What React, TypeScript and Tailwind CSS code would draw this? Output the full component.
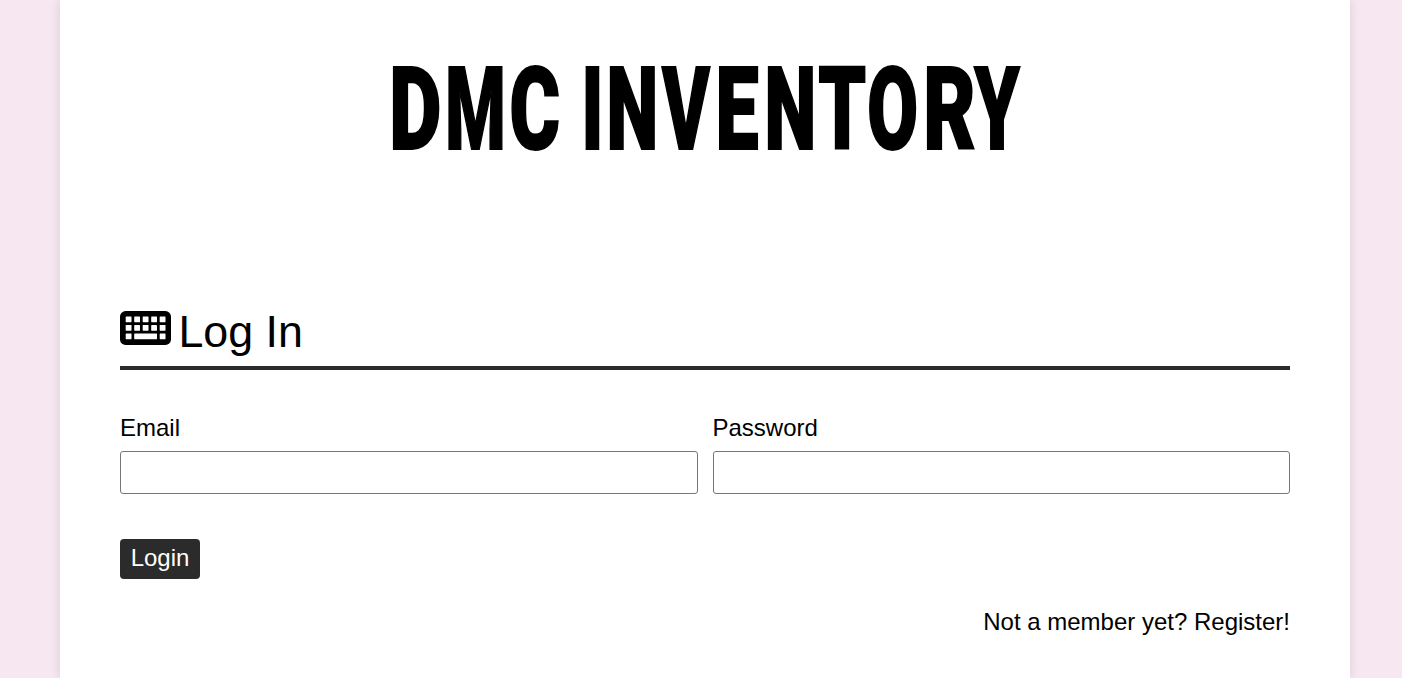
const TITLE = [
  { char: "D", box: "w-[47px] mr-[9px]", scale: "scale-x-[0.70]" },
  { char: "M", box: "w-[55px] mr-[8px]", scale: "scale-x-[0.60]" },
  { char: "C", box: "w-[48px]", scale: "scale-x-[0.67]" },
  { char: " ", box: "w-[26px]", scale: "scale-x-100" },
  { char: "I", box: "w-[15px] mr-[10px]", scale: "scale-x-[0.63]" },
  { char: "N", box: "w-[46px] mr-[6px]", scale: "scale-x-[0.64]" },
  { char: "V", box: "w-[49px] mr-[7px]", scale: "scale-x-[0.63]" },
  { char: "E", box: "w-[40px] mr-[10px]", scale: "scale-x-[0.67]" },
  { char: "N", box: "w-[46px] mr-[5px]", scale: "scale-x-[0.64]" },
  { char: "T", box: "w-[47px] mr-[3px]", scale: "scale-x-[0.66]" },
  { char: "O", box: "w-[48px] mr-[8px]", scale: "scale-x-[0.64]" },
  { char: "R", box: "w-[50px]", scale: "scale-x-[0.70]" },
  { char: "Y", box: "w-[46px]", scale: "scale-x-[0.63]" },
];

function KeyboardIcon({ className }: { className: string }) {
  return (
    <svg viewBox="0 0 51 34" className={className} aria-hidden="true">
      <rect width="51" height="34" rx="5.6" fill="currentColor" />
      <g fill="white">
        {[5.6, 14.1].map((y) =>
          [5.7, 14.2, 22.7, 31.2, 39.7].map((x) => (
            <rect key={`${x}-${y}`} x={x} y={y} width="5.8" height="5.6" rx="0.4" />
          )),
        )}
        <rect x="5.7" y="22.6" width="5.8" height="5.6" rx="0.4" />
        <rect x="14.2" y="22.6" width="22.8" height="5.6" rx="0.4" />
        <rect x="39.7" y="22.6" width="5.8" height="5.6" rx="0.4" />
      </g>
    </svg>
  );
}

function Field({ id, label, type }: { id: string; label: string; type: string }) {
  return (
    <div className="flex flex-1 flex-col">
      <label htmlFor={id} className="h-9 text-[24px] leading-9">
        {label}
      </label>
      <input
        id={id}
        type={type}
        className="mt-[5px] h-[43px] w-full rounded-[3px] border border-[#767676] bg-white px-2 text-[24px] outline-none"
      />
    </div>
  );
}

export default function App() {
  return (
    <div className="h-[678px] overflow-hidden bg-[#f7e7f1] pr-[52px] pl-[60px] font-['Liberation_Sans',Arial,sans-serif] text-black">
      <main className="flex h-full flex-col bg-white px-[60px] shadow-[0_0_10px_rgba(0,0,0,0.12)]">
        <h1 className="mt-[40px] flex h-[140px] justify-center pl-[2px] font-[Roboto,sans-serif] text-[115px] leading-[140px] font-black whitespace-pre [-webkit-text-stroke:2px_black]">
          {TITLE.map((letter, i) => (
            <span key={i} className={`flex shrink-0 justify-center ${letter.box}`}>
              <span className={letter.scale}>{letter.char}</span>
            </span>
          ))}
        </h1>
        <h2 className="mt-[124px] flex h-[66px] items-start border-b-4 border-[#2b2b2b] text-[44.8px] leading-[54px]">
          <KeyboardIcon className="mt-[7px] h-[34px] w-[51px] shrink-0" />
          <span className="ml-[7.4px]">Log In</span>
        </h2>
        <form className="mt-10 flex flex-col" onSubmit={(e) => e.preventDefault()}>
          <div className="flex gap-[15px]">
            <Field id="email" label="Email" type="email" />
            <Field id="password" label="Password" type="password" />
          </div>
          <button
            type="submit"
            className="mt-[45px] h-10 w-20 rounded-[4px] bg-[#2b2b2b] pb-[2px] text-[24px] leading-none text-white"
          >
            Login
          </button>
        </form>
        <a href="#" className="mt-[25px] self-end text-[24px] leading-9">
          Not a member yet? Register!
        </a>
      </main>
    </div>
  );
}
